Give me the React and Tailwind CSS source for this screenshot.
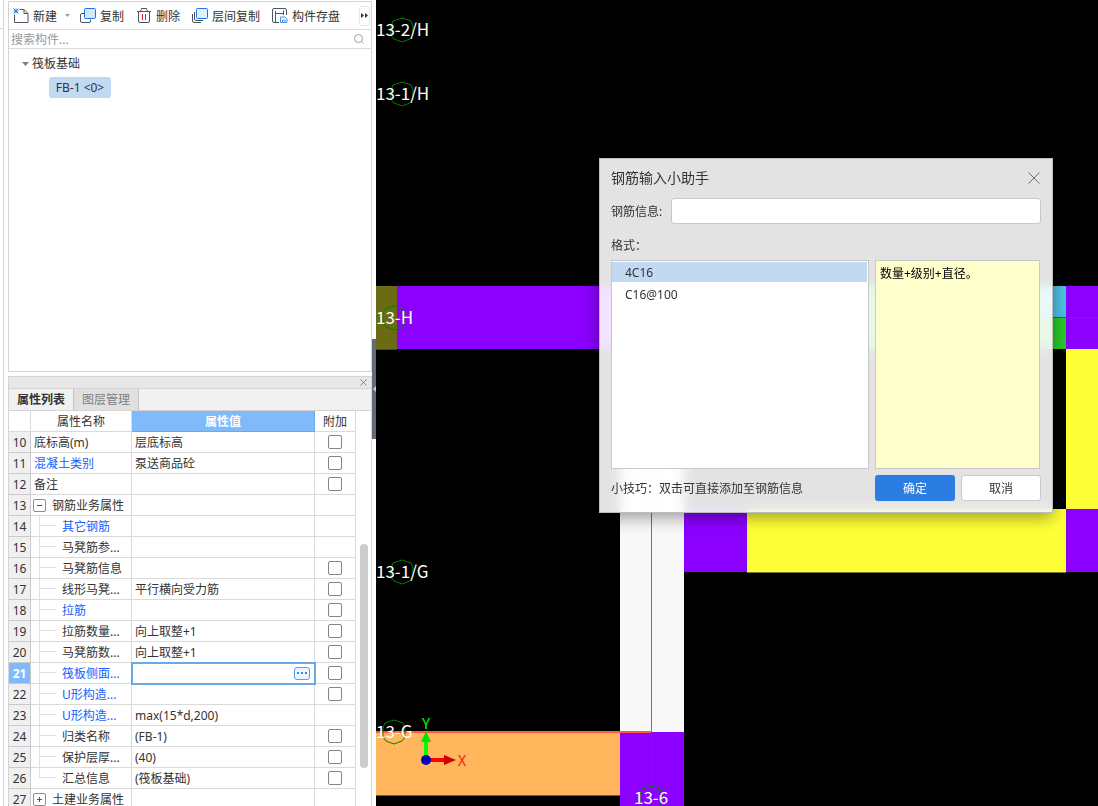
import React, { useState } from 'react';
import clsx from 'clsx';

const ROWS = [
    { no: 10, name: '底标高(m)', value: '层底标高', extra: true },
    { no: 11, name: '混凝土类别', value: '泵送商品砼', extra: true, blue: true },
    { no: 12, name: '备注', value: '', extra: true },
    { no: 13, name: '钢筋业务属性', value: '', group: 'open' },
    { no: 14, name: '其它钢筋', value: '', child: true, blue: true },
    { no: 15, name: '马凳筋参...', value: '', child: true },
    { no: 16, name: '马凳筋信息', value: '', child: true, extra: true },
    { no: 17, name: '线形马凳...', value: '平行横向受力筋', child: true, extra: true },
    { no: 18, name: '拉筋', value: '', child: true, extra: true, blue: true },
    { no: 19, name: '拉筋数量...', value: '向上取整+1', child: true, extra: true },
    { no: 20, name: '马凳筋数...', value: '向上取整+1', child: true, extra: true },
    { no: 21, name: '筏板侧面...', value: '', child: true, extra: true, blue: true, active: true },
    { no: 22, name: 'U形构造...', value: '', child: true, extra: true, blue: true },
    { no: 23, name: 'U形构造...', value: 'max(15*d,200)', child: true, blue: true },
    { no: 24, name: '归类名称', value: '(FB-1)', child: true, extra: true },
    { no: 25, name: '保护层厚...', value: '(40)', child: true, extra: true },
    { no: 26, name: '汇总信息', value: '(筏板基础)', child: true, extra: true, last: true },
    { no: 27, name: '土建业务属性', value: '', group: 'closed' },
];

const AXIS_LABELS = [
    { text: '13-2/H', x: 0, y: 36, cx: 26, cy: 30 },
    { text: '13-1/H', x: 0, y: 100, cx: 26, cy: 94 },
    { text: '13-H', x: 0, y: 324, cx: 18, cy: 318 },
    { text: '13-1/G', x: 0, y: 578, cx: 26, cy: 572 },
    { text: '13-G', x: 0, y: 738, cx: 18, cy: 732 },
    { text: '13-6', x: 258, y: 804, cx: 275, cy: 798 },
];

const NewIcon = () => (
    <svg width="16" height="16" viewBox="0 0 16 16" fill="none">
        <path d="M6.5 1.5H11L15 5.5V14.5H1.5V6.5M11 1.5V5.5H15" stroke="#4b5563" />
        <path d="M.5 .5L5.5 5.5M5.5 .5L.5 5.5M3 .5V5.5M.5 3H5.5" stroke="#2f80e8" />
    </svg>
);

const CopyIcon = () => (
    <svg width="16" height="16" viewBox="0 0 16 16" fill="none">
        <path d="M4 5.5H2Q.5 5.5 .5 7V13Q.5 14.5 2 14.5H9Q10.5 14.5 10.5 13V11.5" stroke="#4b5563" />
        <rect x="4.5" y=".5" width="11" height="10" rx="1" fill="#d6e8fd" stroke="#1a73e8" />
    </svg>
);

const DeleteIcon = () => (
    <svg width="16" height="16" viewBox="-1 0 16 16" fill="none">
        <path d="M0 3.5H14M3.5 3.5L4.5 .5H9.5L10.5 3.5M1.5 3.5V13Q1.5 14.5 3 14.5H11Q12.5 14.5 12.5 13V3.5" stroke="#4b5563" />
        <path d="M5.5 6V12M8.5 6V12" stroke="#e02020" />
    </svg>
);

const FloorCopyIcon = () => (
    <svg width="16" height="16" viewBox="0 0 16 16" fill="none">
        <path d="M.5 6V13Q.5 14.5 2 14.5H9M2.5 4V11Q2.5 12.5 4 12.5H11" stroke="#4b5563" />
        <rect x="4.5" y=".5" width="11" height="10" rx="1" fill="#e3f0fe" stroke="#1a73e8" />
    </svg>
);

const SaveIcon = () => (
    <svg width="16" height="16" viewBox="0 0 16 16" fill="none">
        <path d="M7 14.5H2Q.5 14.5 .5 13V2Q.5 .5 2 .5H13Q14.5 .5 14.5 2V7M3.5 3V14M3.5 5.5H11.5M11.5 2.5V7" stroke="#4b5563" />
        <path d="M8.5 9H13L15 11V14.5H8.5Z" fill="#fff" stroke="#4a90e8" />
        <path d="M10.5 14V12H13V14" stroke="#4a90e8" />
    </svg>
);

const ToolButton = ({ icon, label, className }) => (
    <button type="button" className={clsx('flex items-center gap-1 whitespace-nowrap', className)}>
        {icon}
        <span className="pt-0.5">{label}</span>
    </button>
);

const Toolbar = () => (
    <div className="flex h-7 items-center border-b border-[#dcdcdc] pl-1 pr-px">
        <ToolButton icon={<NewIcon />} label="新建" />
        <button type="button" aria-label="新建选项" className="ml-2 mr-2.5">
            <svg width="5" height="3" viewBox="0 0 5 3" fill="#999"><path d="M0 0H5L2.5 3Z" /></svg>
        </button>
        <ToolButton icon={<CopyIcon />} label="复制" className="mr-3" />
        <ToolButton icon={<DeleteIcon />} label="删除" className="mr-3" />
        <ToolButton icon={<FloorCopyIcon />} label="层间复制" className="mr-3" />
        <ToolButton icon={<SaveIcon />} label="构件存盘" />
        <button type="button" aria-label="更多" className="ml-auto flex h-5 w-[11px] items-center justify-center rounded-[3px] border border-[#e8e8e8]">
            <svg width="7" height="5" viewBox="0 0 7 5" fill="#333" className="shrink-0"><path d="M0 0L3 2.5L0 5ZM4 0L7 2.5L4 5Z" /></svg>
        </button>
    </div>
);

const ComponentList = () => (
    <section className="mt-px border border-[#d4d4d4]">
        <Toolbar />
        <div className="flex h-[19px] items-center border-b border-[#dcdcdc] pl-0.5 pr-[7px]">
            <input type="text" aria-label="搜索构件" placeholder="搜索构件..." className="min-w-0 flex-1 pt-0.5 outline-none placeholder:text-[#999]" />
            <svg width="10" height="10" viewBox="0 0 10 10" fill="none" stroke="#a0a0a0">
                <circle cx="4.5" cy="4.5" r="4" />
                <path d="M7.5 7.5L9.5 9.5" />
            </svg>
        </div>
        <div className="h-[322px] pt-1">
            <button type="button" className="flex h-[21px] items-center gap-[3px] pl-[13px]">
                <svg width="7" height="4" viewBox="0 0 7 4" fill="#808080"><path d="M0 0H7L3.5 4Z" /></svg>
                <span>筏板基础</span>
            </button>
            <button type="button" className="ml-10 mt-[3px] h-[21px] w-[62px] whitespace-nowrap rounded-[3px] bg-[#c2d9f2]">
                FB-1 &lt;0&gt;
            </button>
        </div>
    </section>
);

const NameCell = ({ row }) => (
    <div className="flex h-5 items-center whitespace-nowrap">
        {row.group && (
            <button type="button" aria-label={row.name} className="ml-0.5 mr-1.5 flex h-[13px] w-[13px] items-center justify-center rounded-[2px] border border-[#8c8c8c]">
                <svg width="5" height="5" viewBox="0 0 5 5" stroke="#555">
                    <path d={row.group === 'open' ? 'M0 2.5H5' : 'M0 2.5H5M2.5 0V5'} />
                </svg>
            </button>
        )}
        {row.child && (
            <span className="ml-2 mr-1.5 flex w-[17px] flex-col self-stretch">
                <span className="h-[10px] border-b border-l border-[#e0e0e0]" />
                {!row.last && <span className="h-[10px] border-l border-[#e0e0e0]" />}
            </span>
        )}
        <span className={clsx('pt-0.5', !row.group && !row.child && 'pl-[3px]', row.blue && 'text-[#1560ff]')}>{row.name}</span>
    </div>
);

const PropertyTable = () => (
    <table className="w-[347px] shrink-0 table-fixed border-separate border-spacing-0">
        <colgroup>
            <col className="w-[22px]" />
            <col className="w-[101px]" />
            <col />
            <col className="w-[41px]" />
        </colgroup>
        <thead>
            <tr className="h-[21px]">
                <th aria-label="序号" className="border-b border-r border-[#dadada] p-0" />
                <th className="border-b border-r border-[#dadada] p-0 pt-0.5 font-normal">属性名称</th>
                <th className="border-b border-r border-[#6ea9e8] bg-[#80bafa] p-0 pt-0.5 font-bold text-white">属性值</th>
                <th className="border-b border-r border-[#dadada] p-0 pt-0.5 font-normal">附加</th>
            </tr>
        </thead>
        <tbody>
            {ROWS.map((row) => (
                <tr key={row.no} className="h-[21px]">
                    <th
                        scope="row"
                        className={clsx(
                            'border-b border-r border-[#cacaca] p-0 pt-0.5',
                            row.active ? 'bg-[#80bafa] font-bold text-white' : 'bg-[#f0f0f0] font-normal'
                        )}
                    >
                        {row.no}
                    </th>
                    <td className="border-b border-r border-[#dadada] p-0"><NameCell row={row} /></td>
                    {row.active ? (
                        <td className="border-b border-r border-[#6aa9e8] p-0 outline-2 -outline-offset-1 outline-[#6aa9e8]">
                            <div className="flex h-5 items-center pl-1 pr-1">
                                <input type="text" aria-label={row.name} defaultValue={row.value} className="min-w-0 flex-1 outline-none" />
                                <button type="button" aria-label="编辑" className="flex h-[13px] w-4 items-center justify-center rounded-[3px] border border-[#5a9de6] bg-[#eef5fe]">
                                    <svg width="10" height="2" viewBox="0 0 10 2" fill="#3a86e0"><path d="M0 0H2V2H0ZM4 0H6V2H4ZM8 0H10V2H8Z" /></svg>
                                </button>
                            </div>
                        </td>
                    ) : (
                        <td className="whitespace-nowrap border-b border-r border-[#dadada] p-0 pl-[3px] pt-0.5">{row.value}</td>
                    )}
                    <td className="border-b border-r border-[#dadada] p-0">
                        {row.extra && (
                            <input type="checkbox" aria-label={`${row.name} 附加`} className="mx-auto block h-[14px] w-[14px] appearance-none rounded-[2px] border border-[#858585] bg-white checked:bg-[#2b7de1]" />
                        )}
                    </td>
                </tr>
            ))}
        </tbody>
    </table>
);

const PropertyPanel = () => (
    <section className="mt-1 flex min-h-0 flex-1 flex-col overflow-hidden border border-b-0 border-[#d4d4d4]">
        <div className="flex h-[11px] shrink-0 items-center justify-end bg-[#e7e7e7] pr-1">
            <button type="button" aria-label="关闭面板">
                <svg width="7" height="7" viewBox="0 0 7 7" stroke="#888"><path d="M.5 .5L6.5 6.5M6.5 .5L.5 6.5" /></svg>
            </button>
        </div>
        <div className="flex h-[23px] shrink-0 border-y border-[#d4d4d4] bg-[#f1f1f1]">
            <button type="button" className="w-16 font-bold">属性列表</button>
            <button type="button" className="w-[66px] border-x border-[#c4c4c4] bg-[#e0e0e0] text-[#808080]">图层管理</button>
        </div>
        <div className="flex min-h-0 flex-1">
            <PropertyTable />
            <div className="flex flex-1 flex-col items-center pt-[133px]">
                <div className="h-56 w-2 shrink-0 rounded-full bg-[#cdcdcd]" />
            </div>
        </div>
    </section>
);

const Drawing = () => (
    <svg className="block h-full w-full bg-black">
        <rect x="0" y="286" width="21" height="63" fill="#6b6b14" />
        <rect x="21" y="286" width="287" height="63" fill="#8b00ff" />
        <rect x="372" y="286" width="318" height="63" fill="#29cc29" />
        <rect x="664" y="286" width="26" height="32" fill="#4dc3e6" />
        <rect x="690" y="286" width="100%" height="63" fill="#8b00ff" />
        <rect x="690" y="349" width="100%" height="160" fill="#ffff38" />
        <rect x="371" y="509" width="319" height="63" fill="#ffff38" />
        <rect x="690" y="509" width="100%" height="63" fill="#8b00ff" />
        <rect x="308" y="509" width="63" height="63" fill="#8b00ff" />
        <rect x="244" y="349" width="64" height="383" fill="#f8f8f8" />
        <rect x="0" y="732" width="244" height="64" fill="#ffb65c" />
        <rect x="244" y="732" width="64" height="100%" fill="#8b00ff" />

        {/* element outlines */}
        <rect x="0" y="349" width="21" height="1" fill="#4a4a10" />
        <rect x="0" y="795" width="244" height="1" fill="#7a5a2c" />
        <rect x="371" y="572" width="319" height="1" fill="#7a7a1c" />

        {/* axis lines */}
        <rect x="21" y="317" width="287" height="1" fill="#a000dc" />
        <rect x="664" y="317" width="100%" height="1" fill="#d0104c" />
        <rect x="275" y="349" width="1" height="383" fill="#ff3c3c" />
        <rect x="0" y="731" width="276" height="2" fill="#ff5a3c" />
        <rect x="275" y="732" width="1" height="54" fill="#d00078" />

        {AXIS_LABELS.map((a) => (
            <g key={a.text}>
                <polygon
                    points="0,-12 9,-9 11,-4 11,5 8,9 0,12 -8,9 -11,5 -11,-4 -9,-9"
                    transform={`translate(${a.cx} ${a.cy})`}
                    fill="none"
                    stroke="#008000"
                />
                <text x={a.x} y={a.y} fontSize="17" fill="#fff" className="font-['Noto_Sans_CJK_SC',sans-serif]">{a.text}</text>
            </g>
        ))}

        {/* coordinate axes */}
        <path d="M50 756V740" stroke="#00ff00" strokeWidth="4" />
        <path d="M50 731L55 742H45Z" fill="#00e400" />
        <path d="M54 760H69" stroke="#ff0000" strokeWidth="4" />
        <path d="M80 760L68 755V765Z" fill="#d00000" />
        <circle cx="50" cy="760" r="5" fill="#0000b8" />
        <g fontSize="15" textAnchor="middle" className="font-['Noto_Sans_CJK_SC',sans-serif]">
            <text x="50" y="729" fill="#00ff00">Y</text>
            <text x="86" y="766" fill="#ff2020">X</text>
        </g>
    </svg>
);

const FORMATS = ['4C16', 'C16@100'];

const RebarDialog = () => {
    const [info, setInfo] = useState('');
    const [selected, setSelected] = useState('4C16');

    return (
        <div
            role="dialog"
            aria-label="钢筋输入小助手"
            className="absolute left-[223px] top-[158px] w-[454px] border border-[#bdbdbd] bg-white/89 px-[11px] pb-[11px] shadow-[0_4px_16px_rgba(0,0,0,0.4)] backdrop-blur-[6px]"
        >
            <div className="flex h-[39px] items-center justify-between pb-0.5 pr-px">
                <h2 className="text-[14px]">钢筋输入小助手</h2>
                <button type="button" aria-label="关闭">
                    <svg width="12" height="12" viewBox="0 0 12 12" stroke="#707070"><path d="M.5 .5L11.5 11.5M11.5 .5L.5 11.5" /></svg>
                </button>
            </div>
            <div className="flex items-center">
                <label htmlFor="rebar-info" className="w-[60px] pt-0.5">钢筋信息:</label>
                <input
                    id="rebar-info"
                    type="text"
                    value={info}
                    onChange={(e) => setInfo(e.target.value)}
                    className="h-[26px] min-w-0 flex-1 rounded-[3px] border border-[#c8c8c8] bg-white px-1 outline-none"
                />
            </div>
            <div className="flex h-9 items-center pt-2">格式：</div>
            <div className="flex h-[209px] gap-1.5">
                <ul role="listbox" aria-label="格式" className="flex-1 border border-[#c8c8c8] bg-white pt-px">
                    {FORMATS.map((f) => (
                        <li
                            key={f}
                            role="option"
                            aria-selected={selected === f}
                            onClick={() => setSelected(f)}
                            onDoubleClick={() => setInfo(f)}
                            className={clsx('mr-px mb-0.5 flex h-5 items-center pl-[13px] pt-0.5', selected === f && 'bg-[#c2d9f2]')}
                        >
                            {f}
                        </li>
                    ))}
                </ul>
                <div className="mr-px w-[165px] border border-[#c8c8c8] bg-[#ffffcc] px-1 pt-[5px] text-black">数量+级别+直径。</div>
            </div>
            <div className="mt-1.5 flex items-center gap-1.5">
                <p className="flex-1 pt-0.5">小技巧：双击可直接添加至钢筋信息</p>
                <button type="button" className="h-[26px] w-20 rounded-[3px] bg-[#2b7de1] pt-0.5 text-white">确定</button>
                <button type="button" className="h-[26px] w-20 rounded-[3px] border border-[#c8c8c8] bg-white pt-0.5">取消</button>
            </div>
        </div>
    );
};

const App = () => (
    <div className="flex h-screen overflow-hidden bg-white font-['Noto_Sans','Noto_Sans_CJK_SC',sans-serif] text-[12px] leading-4 text-[#333]">
        <aside className="flex w-[376px] shrink-0">
            <div className="mr-1 w-1 border-r border-[#d4d4d4]">
                <div className="h-[29px] border-b border-[#dcdcdc]" />
            </div>
            <div className="flex min-w-0 flex-1 flex-col">
                <ComponentList />
                <PropertyPanel />
            </div>
            <div className="w-1 pt-[339px]">
                <button type="button" aria-label="收起面板" className="flex h-[100px] w-1 items-center bg-[#616a78]">
                    <svg width="4" height="6" viewBox="0 0 4 6" fill="#c8ccd2"><path d="M4 0V6L1 3Z" /></svg>
                </button>
            </div>
        </aside>
        <main className="relative min-w-0 flex-1 overflow-hidden">
            <Drawing />
            <RebarDialog />
        </main>
    </div>
);

export default App;
